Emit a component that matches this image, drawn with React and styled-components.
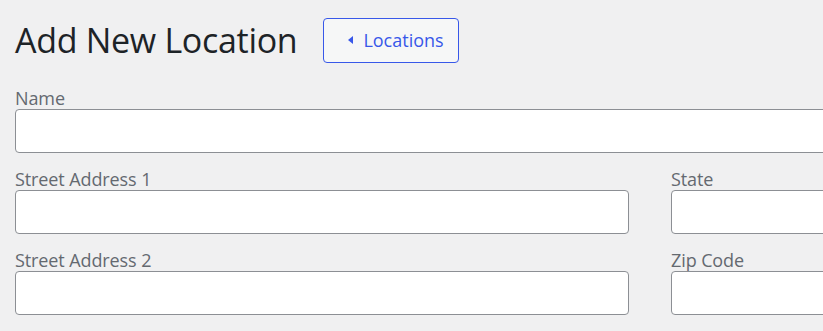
import styled, { createGlobalStyle } from "styled-components";

const GlobalStyle = createGlobalStyle`
  body {
    margin: 0;
    background: #f0f0f1;
    font-family: "Open Sans", "Noto Sans", sans-serif;
    overflow: hidden;
  }
`;

const Page = styled.div`
  width: 1100px;
  padding: 17px 0 0 15px;
`;

const Header = styled.div`
  display: flex;
  align-items: center;
  gap: 26px;
`;

const Title = styled.h1`
  margin: 0;
  font-size: 34px;
  font-weight: 400;
  color: #1d2327;
  letter-spacing: -0.3px;
`;

const BackButton = styled.a`
  display: inline-flex;
  align-items: center;
  gap: 10px;
  height: 45px;
  box-sizing: border-box;
  padding: 0 14px 0 24px;
  background: #f6f7f7;
  border: 1px solid #3858e9;
  border-radius: 4px;
  color: #3858e9;
  font-size: 18px;
  text-decoration: none;
  cursor: pointer;
`;

const Arrow = styled.span`
  width: 0;
  height: 0;
  border-top: 4px solid transparent;
  border-bottom: 4px solid transparent;
  border-right: 5px solid #3858e9;
`;

const Form = styled.form`
  display: grid;
  grid-template-columns: 614px 400px;
  column-gap: 42px;
  row-gap: 16px;
  margin-top: 25px;
`;

const Field = styled.div`
  display: flex;
  flex-direction: column;
  grid-column: ${(p) => (p.$wide ? "1 / -1" : "auto")};
`;

const Label = styled.label`
  font-size: 18px;
  color: #646970;
  line-height: 21px;
  letter-spacing: -0.1px;
`;

const Input = styled.input`
  height: 44px;
  box-sizing: border-box;
  border: 1px solid #8c8f94;
  border-radius: 4px;
  background: #fff;
  padding: 0 10px;
  font-size: 16px;
  font-family: inherit;
`;

export default function App() {
  return (
    <>
      <GlobalStyle />
      <Page>
        <Header>
          <Title>Add New Location</Title>
          <BackButton>
            <Arrow />
            Locations
          </BackButton>
        </Header>
        <Form>
          <Field $wide>
            <Label>Name</Label>
            <Input />
          </Field>
          <Field>
            <Label>Street Address 1</Label>
            <Input />
          </Field>
          <Field>
            <Label>State</Label>
            <Input />
          </Field>
          <Field>
            <Label>Street Address 2</Label>
            <Input />
          </Field>
          <Field>
            <Label>Zip Code</Label>
            <Input />
          </Field>
        </Form>
      </Page>
    </>
  );
}
